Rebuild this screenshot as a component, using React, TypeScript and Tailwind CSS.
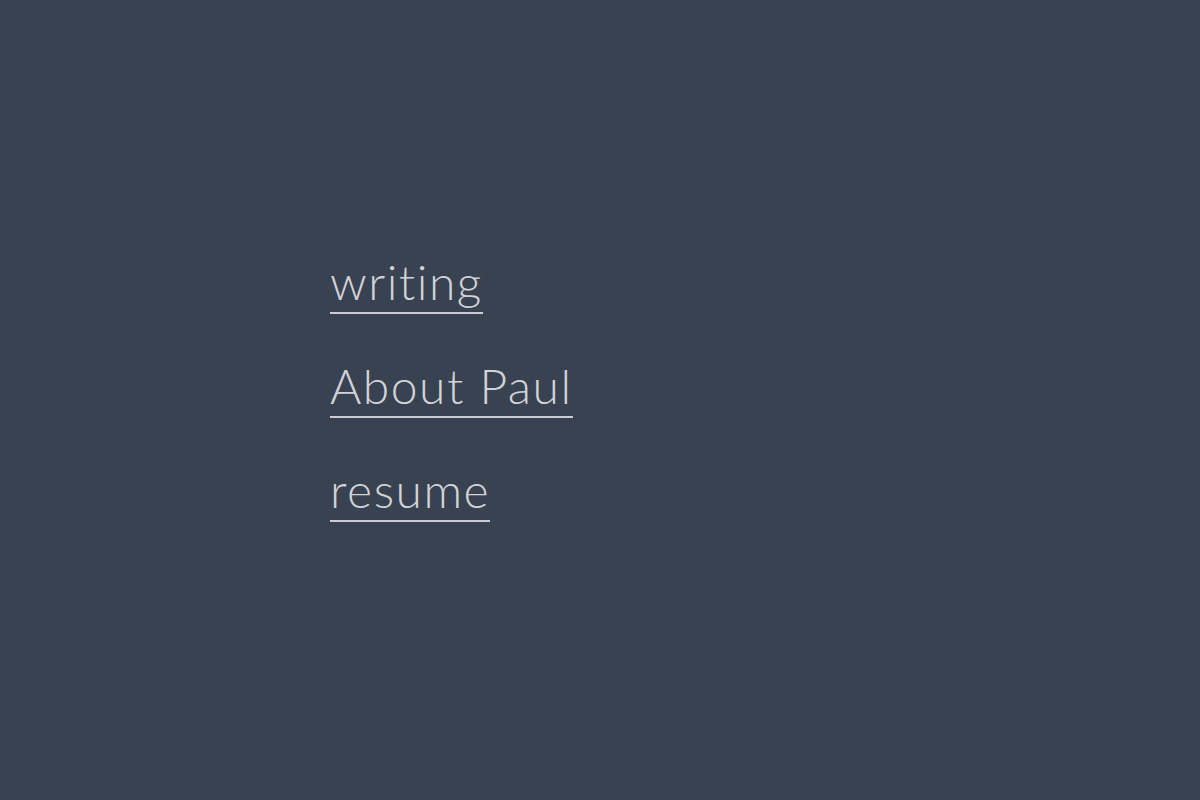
import React from "react";

const links = ["writing", "About Paul", "resume"];

const App = (): JSX.Element => {
    return (
        <main className="min-h-screen w-full bg-[#394250] flex items-center">
            <nav className="flex flex-col gap-[44px] pl-[330px] pb-[24px]">
                {links.map((link) => {
                    return (
                        <a
                            key={link}
                            href="#"
                            className="self-start border-b-2 border-[#c9ccd1] pb-[3px] text-[#d0d3d8] text-[48px] leading-[55px] font-light tracking-[1.5px]"
                            style={{ fontFamily: "Lato, 'Open Sans', sans-serif" }}
                        >
                            {link}
                        </a>
                    );
                })}
            </nav>
        </main>
    );
};

export default App;
